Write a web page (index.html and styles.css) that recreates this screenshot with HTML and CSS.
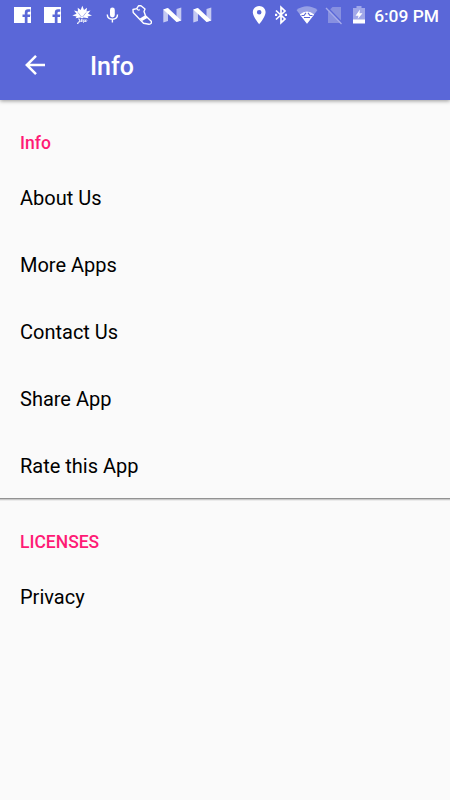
FILE: index.html
```html
<!DOCTYPE html>
<html lang="en">
<head>
<meta charset="utf-8">
<meta name="viewport" content="width=device-width">
<title>Info</title>
<link rel="stylesheet" href="styles.css">
</head>
<body>
<header class="header">
  <div class="status">
    <div class="notifications">
      <svg class="icon" viewBox="0 0 20 20"><path fill="#fff" fill-rule="evenodd" d="M2 2H19V18H15.500V12H18L18.300 9.500H15.500V8Q15.500 6.700 17 6.700H18.300V4.300H16Q12.800 4.300 12.800 7.500V9.500H10.500V12H12.800V18H2Z"/></svg>
      <svg class="icon" viewBox="0 0 20 20"><path fill="#fff" fill-rule="evenodd" d="M2 2H19V18H15.500V12H18L18.300 9.500H15.500V8Q15.500 6.700 17 6.700H18.300V4.300H16Q12.800 4.300 12.800 7.500V9.500H10.500V12H12.800V18H2Z"/></svg>
      <svg class="icon" viewBox="0 0 20 20"><path fill="#fff" d="M10.300 .8L12 5L15 2.700L14.500 6.500L18.500 5.500L16 8.700L20 10.500L15.500 11.500L16.500 13.300L11.500 12.500L10 13.500L8.500 12.500L3.500 13.300L4.700 11.500L.3 10.500L4.500 8.700L2 5.500L6 6.500L5.700 2.700L8.700 5Z"/><path fill="none" stroke="#5a67d8" stroke-width=".5" d="M9.500 12L6 7.500M10.500 12L14.200 7.500"/><path fill="none" stroke="#fff" stroke-width=".9" stroke-opacity=".9" d="M6 14Q8.500 13 7.500 16Q6.500 19.500 5 18.500Q6 17 9 16L10 14L9.500 17L12 14.500L11.500 17.500L14 14.500L13.500 17L15 15.500"/></svg>
      <svg class="icon" viewBox="0 0 20 20"><rect x="8" y="2.500" width="4.800" height="10" rx="2.400" fill="#fff"/><path fill="none" stroke="#fff" stroke-width="1.400" d="M5.300 9.500Q5.300 14.200 10.400 14.200T15.500 9.500M10.400 14V17.500"/></svg>
      <svg class="icon" viewBox="0 0 20 20"><path fill="none" stroke="#fff" stroke-width="1.400" stroke-linejoin="round" d="M1 4.500L4.700 3.600L6.500 .8L9 .8L13 4L12 6.500L13.500 10.800L19.300 16.300Q20 19 17 19.300L11.500 18.300L6.500 13L1.200 7.500Z"/><path fill="none" stroke="#fff" stroke-width="1.100" d="M4.700 3.600L6.200 5.200L8 4.800"/><path fill="#fff" d="M7.800 13.500L13.300 10.300L15.800 12.800L10 16Z"/></svg>
      <svg class="icon" viewBox="0 0 20 20"><path fill="#c4c9f2" d="M1.300 4.500L6 3V16L1.300 17.500ZM14.500 4L19.300 2.500V15.500L14.500 17Z"/><path fill="#fff" d="M1.300 4.500L6 3L19.300 15.500L14.500 17Z"/></svg>
      <svg class="icon" viewBox="0 0 20 20"><path fill="#c4c9f2" d="M1.300 4.500L6 3V16L1.300 17.500ZM14.500 4L19.300 2.500V15.500L14.500 17Z"/><path fill="#fff" d="M1.300 4.500L6 3L19.300 15.500L14.500 17Z"/></svg>
    </div>
    <div class="system">
      <svg class="pin" viewBox="0 0 14 20"><path fill="#fff" fill-rule="evenodd" d="M7.200 1C3.600 1 .8 3.800.8 7.300C.8 12 7.200 19.200 7.200 19.200S13.600 12 13.600 7.300C13.600 3.800 10.800 1 7.200 1ZM7.200 5A2.300 2.300 0 1 1 7.200 9.600A2.300 2.300 0 1 1 7.200 5Z"/></svg>
      <svg class="bluetooth" viewBox="0 0 12 20"><path fill="none" stroke="#fff" stroke-width="1.700" d="M1 5.500L10 14L6 17.700V2.300L10 6L1 14.500"/><path fill="#fff" d="M0 8.800H2.200V11H0ZM9.800 8.800H12V11H9.800Z"/></svg>
      <svg class="wifi" viewBox="0 0 22 20"><path fill="#969fe5" d="M.5 5Q11-2.500 21.500 5L11 18.800Z"/><path fill="#fff" d="M3.800 9.500Q11 3.500 18.200 9.500L11 18.800Z"/><path fill="none" stroke="#5a67d8" stroke-width="1.100" d="M5.500 10.500H8L10 7.800M16.500 10.500H14L12 7.800M8 12.500H14"/></svg>
      <svg class="sim" viewBox="0 0 18 20"><path fill="#8790e0" d="M7.500 2H16V18H3V6.500Z"/><path stroke="#5a67d8" stroke-width="1.500" d="M2 2L17 17.500"/><path stroke="#a5abea" stroke-width="1.300" d="M1 3L16.500 19"/></svg>
      <svg class="battery" viewBox="0 0 14 20"><path fill="#a0a7e9" d="M4.500 1H9.500V3H13V15H1V3H4.500Z"/><path fill="#fff" d="M1 14.500H13V18.500H1ZM8 4.500L3.500 10.800H6.500L5.700 14L10.500 8.300H7.500Z"/></svg>
      <span class="clock">6:09 PM</span>
    </div>
  </div>
  <div class="toolbar">
    <svg class="back" viewBox="0 0 24 24"><path fill="none" stroke="#fff" stroke-width="2.500" d="M22 12H3.800M13 2.800L3.800 12L13 21.200"/></svg>
    <h1 class="title">Info</h1>
  </div>
</header>
<main>
  <section class="group">
    <h2 class="category">Info</h2>
    <ul class="list">
      <li class="item">About Us</li>
      <li class="item">More Apps</li>
      <li class="item">Contact Us</li>
      <li class="item">Share App</li>
      <li class="item">Rate this App</li>
    </ul>
  </section>
  <div class="divider"></div>
  <section class="group">
    <h2 class="category">LICENSES</h2>
    <ul class="list">
      <li class="item">Privacy</li>
    </ul>
  </section>
</main>
</body>
</html>
```

FILE: styles.css
```css
* { box-sizing: border-box; }
body {
  margin: 0;
  min-height: 100vh;
  background: #fafafa;
  color: #000;
  font-family: Roboto, sans-serif;
}
svg { display: block; flex: none; }
.header {
  height: 100px;
  background: #5a67d8;
  color: #fff;
  box-shadow: 0 1px 4px rgba(0, 0, 0, .4);
}
.status {
  display: flex;
  justify-content: space-between;
  height: 30px;
  padding: 0 11px 0 12px;
}
.notifications { display: flex; align-items: center; gap: 10px; }
.icon { width: 20px; height: 20px; }
.system { display: flex; align-items: center; }
.pin { width: 14px; height: 20px; margin-right: 9px; }
.bluetooth { width: 12px; height: 20px; margin-right: 9px; }
.wifi { width: 22px; height: 20px; margin-right: 7px; }
.sim { width: 18px; height: 20px; margin-right: 9px; }
.battery { width: 14px; height: 20px; margin-right: 8px; }
.clock { font-size: 17.4px; font-weight: 500; line-height: 30px; padding-top: 1px; white-space: nowrap; }
.toolbar {
  display: flex;
  align-items: center;
  height: 70px;
  padding-left: 23px;
}
.back { width: 24px; height: 24px; }
.title { margin: 4px 0 0 43px; font-size: 25px; font-weight: 500; line-height: 30px; }
.category {
  margin: 0;
  padding: 21px 20px 0;
  height: 65px;
  color: #ff1a75;
  font-size: 17.5px;
  font-weight: 500;
  line-height: 44px;
}
.list { margin: 0; padding: 0; list-style: none; }
.item {
  height: 66.9px;
  padding: 0 20px;
  font-size: 20px;
  line-height: 66.9px;
}
.divider {
  height: 3px;
  margin: -1.5px 0 -1.7px;
  background: linear-gradient(#929292 0 1px, #c9c9c9 1px 2px, #ebebeb 2px);
}
```
